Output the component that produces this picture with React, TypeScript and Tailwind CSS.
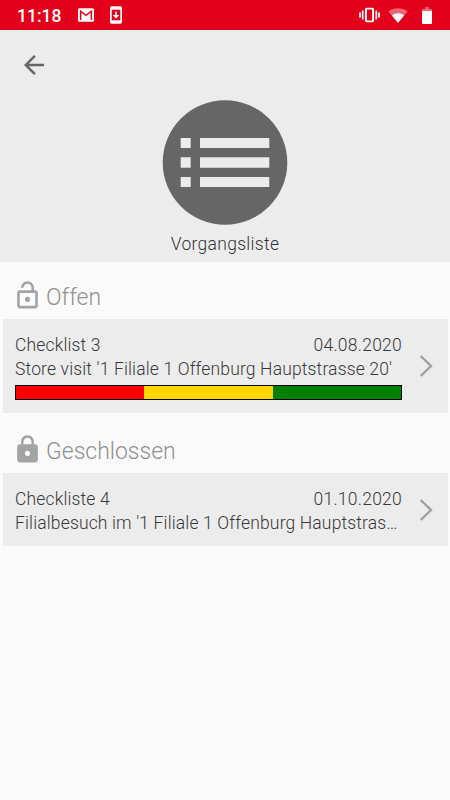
import React from 'react';

interface Entry {
  title: string;
  date: string;
  description: string;
  progress?: boolean;
}

const OPEN_ENTRY: Entry = {
  title: 'Checklist 3',
  date: '04.08.2020',
  description: "Store visit '1 Filiale 1 Offenburg Hauptstrasse 20'",
  progress: true,
};

const CLOSED_ENTRY: Entry = {
  title: 'Checkliste 4',
  date: '01.10.2020',
  description: "Filialbesuch im '1 Filiale 1 Offenburg Hauptstras…",
};

const StatusBar = () => (
  <div className="flex h-[30px] items-center bg-[#e3001b] px-[17px] text-white">
    <span className="w-[61px] pt-[2px] text-[17.5px] leading-[30px] font-medium">11:18</span>
    <svg className="h-[14px] w-4" viewBox="0 0 16 14">
      <rect width="16" height="13.5" rx="1.5" y="0.2" fill="#fff" />
      <path d="M2.6 12V3.2L8 7.3l5.4-4.1V12" fill="none" stroke="#e3001b" strokeWidth="1.5" />
    </svg>
    <svg className="ml-4 h-[18px] w-3" viewBox="0 0 12 18">
      <rect width="12" height="17.6" y="0.2" rx="1.7" fill="#fff" />
      <path d="M1.7 3.7h8.6v10.6H1.7z" fill="#e3001b" />
      <path d="M5.2 5.7h1.6v3.4h2.5L6 12.5 2.7 9.1h2.5z" fill="#fff" />
    </svg>
    <div className="flex-1" />
    <svg className="mr-px h-4 w-[21px]" viewBox="0 0 21 16">
      <rect x="6.9" y="1.6" width="7.2" height="12.8" rx="0.8" fill="none" stroke="#fff" strokeWidth="1.9" />
      <path d="M3.7 3.5v9M17.3 3.5v9M1 5.5v5M20 5.5v5" stroke="#fff" strokeWidth="1.7" />
    </svg>
    <svg className="ml-[7px] h-[15px] w-[20px]" viewBox="0 0 20 15">
      <path d="M0.4 3.6C5.9-.8 14.1-.8 19.6 3.6L10 15z" fill="#fff" fillOpacity="0.4" />
      <path d="M3.9 7.4C7.6 4.4 12.4 4.4 16.1 7.4L10 14.8z" fill="#fff" />
    </svg>
    <svg className="mr-px ml-[14px] h-[17px] w-[10px]" viewBox="0 0 10 17">
      <path d="M3 0h4v2h3v2H0V2h3z" fill="#fff" fillOpacity="0.4" />
      <path d="M0 4h10v12a1 1 0 0 1-1 1H1a1 1 0 0 1-1-1z" fill="#fff" />
    </svg>
  </div>
);

const Header = () => (
  <header className="flex h-[232px] flex-col bg-[#ececec]">
    <button className="ml-[19px] mt-[20px] size-[30px]" aria-label="Zurück">
      <svg className="size-[30px]" viewBox="0 0 24 24" fill="#666">
        <path d="M20 11H7.83l5.59-5.59L12 4l-8 8 8 8 1.41-1.41L7.83 13H20v-2z" />
      </svg>
    </button>
    <svg className="ml-[162px] mt-5 h-[125px] w-[126px] shrink-0" viewBox="0 0 126 125">
      <circle cx="63" cy="62.5" r="62.3" fill="#666" />
      <path
        d="M18.7 38h10v10h-10zM38 38h69.3v10H38zM18.7 57.3h10v10.4h-10zM38 57.3h69.3v10.4H38zM18.7 77h10v10h-10zM38 77h69.3v10H38z"
        fill="#ececec"
      />
    </svg>
    <h1 className="mt-[7px] text-center text-[17.5px] leading-6 font-light tracking-[0.3px] text-[#333]">
      Vorgangsliste
    </h1>
  </header>
);

const SectionTitle = ({ label, path }: { label: string; path: string }) => (
  <h2 className="flex h-[31px] items-center pl-[12px] text-[23px] leading-[31px] font-light text-[#909090]">
    <svg className="mr-[3px] size-[31px]" viewBox="0 0 24 24" fill="#a3a3a3">
      <path d={path} />
    </svg>
    <span className="pt-[3px]">{label}</span>
  </h2>
);

const EntryCard = ({ entry }: { entry: Entry }) => (
  <div className="mr-[2px] ml-[3px] flex items-center bg-[#ececec] pl-3">
    <div className={entry.progress ? 'w-[387px] pb-[13px] pt-[14px]' : 'w-[387px] pb-[11px] pt-[14px]'}>
      <div className="flex justify-between text-[17.5px] leading-6 font-light tracking-[0.15px] text-[#383838]">
        <span>{entry.title}</span>
        <span className="tracking-[0.25px]">{entry.date}</span>
      </div>
      <p className="whitespace-nowrap text-[17.5px] leading-6 font-light tracking-[0.15px] text-[#383838]">
        {entry.description}
      </p>
      {entry.progress && (
        <div className="mt-[4px] flex h-[15px] border border-black">
          <div className="flex-1 bg-[#ff0000]" />
          <div className="flex-1 bg-[#ffd700]" />
          <div className="flex-1 bg-[#008000]" />
        </div>
      )}
    </div>
    <svg className="ml-[17px] h-6 w-[15px]" viewBox="0 0 15 24" fill="none" stroke="#a0a0a0" strokeWidth="2.4">
      <path d="M1.7 2L12 12 1.7 22" />
    </svg>
  </div>
);

const LOCK_OPEN =
  'M12 17c1.1 0 2-.9 2-2s-.9-2-2-2-2 .9-2 2 .9 2 2 2zm6-9h-1V6c0-2.76-2.24-5-5-5S7 3.24 7 6h1.9c0-1.71 1.39-3.1 3.1-3.1 1.71 0 3.1 1.39 3.1 3.1v2H6c-1.1 0-2 .9-2 2v10c0 1.1.9 2 2 2h12c1.1 0 2-.9 2-2V10c0-1.1-.9-2-2-2zm0 12H6V10h12v10z';
const LOCK_CLOSED =
  'M18 8h-1V6c0-2.76-2.24-5-5-5S7 3.24 7 6v2H6c-1.1 0-2 .9-2 2v10c0 1.1.9 2 2 2h12c1.1 0 2-.9 2-2V10c0-1.1-.9-2-2-2zm-6 9c-1.1 0-2-.9-2-2s.9-2 2-2 2 .9 2 2-.9 2-2 2zm3.1-9H8.9V6c0-1.71 1.39-3.1 3.1-3.1 1.71 0 3.1 1.39 3.1 3.1v2z';

export default function App() {
  return (
    <div className="min-h-screen w-full bg-[#fafafa] font-['Roboto',sans-serif]">
      <StatusBar />
      <Header />
      <main>
        <section className="pt-[18px]">
          <SectionTitle label="Offen" path={LOCK_OPEN} />
          <div className="mt-2">
            <EntryCard entry={OPEN_ENTRY} />
          </div>
        </section>
        <section className="pt-[21px]">
          <SectionTitle label="Geschlossen" path={LOCK_CLOSED} />
          <div className="mt-2">
            <EntryCard entry={CLOSED_ENTRY} />
          </div>
        </section>
      </main>
    </div>
  );
}
